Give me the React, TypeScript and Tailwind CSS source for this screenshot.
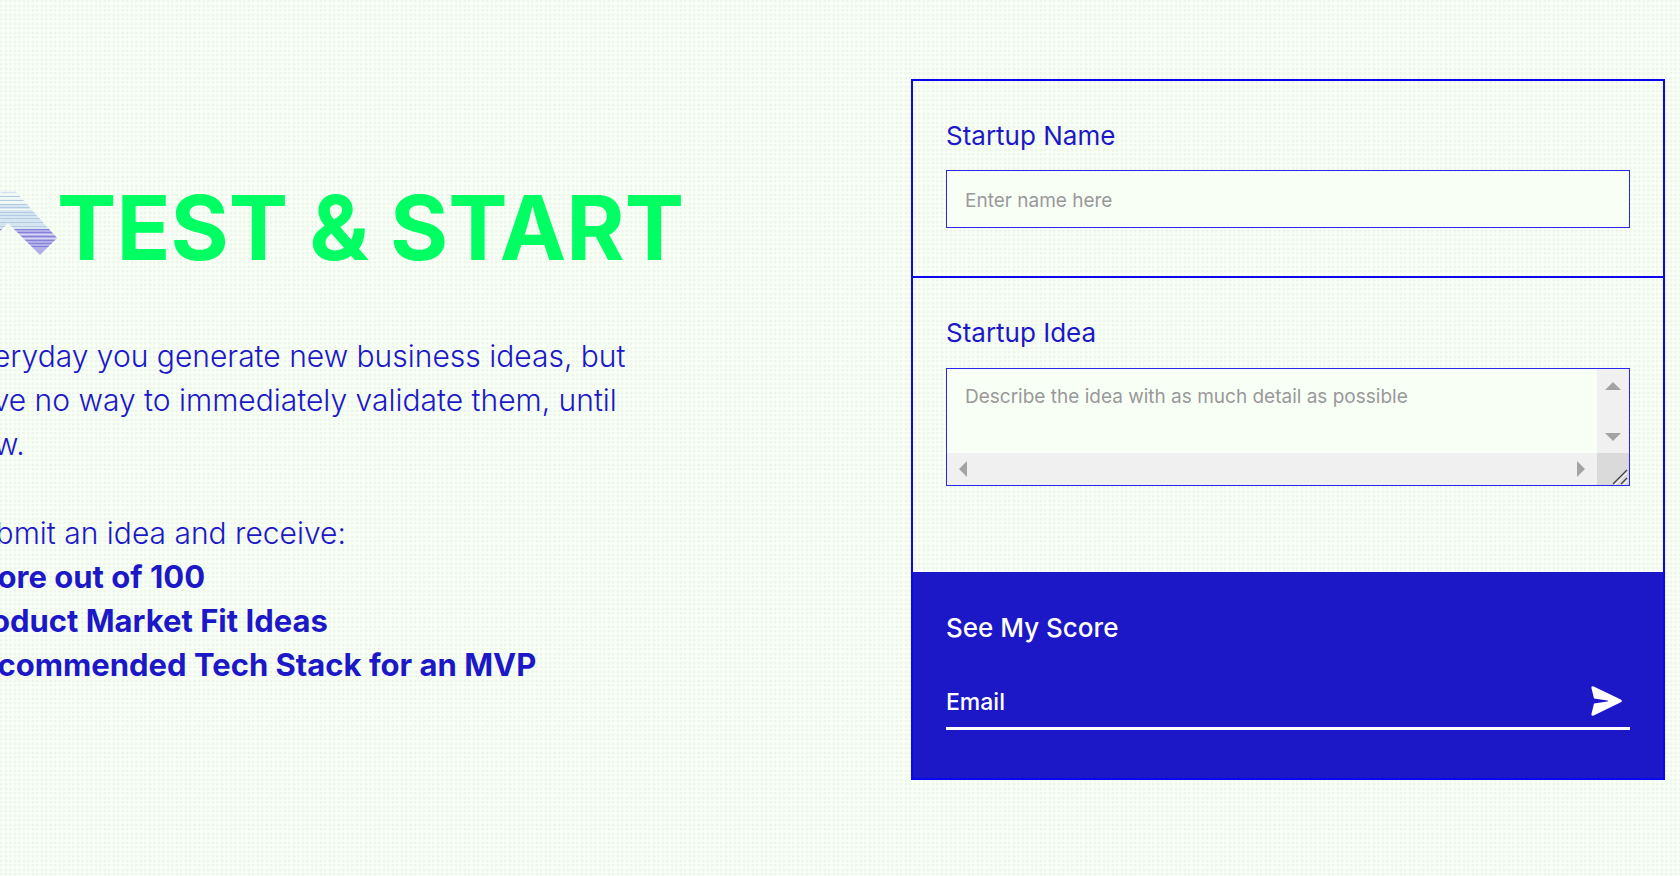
import { FormEvent, useState } from "react";

function Logo() {
  return (
    <svg width="98" height="64" viewBox="0 0 98 64" className="mt-2 shrink-0" aria-hidden="true">
      <defs>
        <clipPath id="chevron">
          <path d="M43 0H56L98 47L81 64L49 32L17 64L0 47Z" />
        </clipPath>
      </defs>
      <g clipPath="url(#chevron)">
        <path d="M0 0H98V14H0Z" fill="#eaf4f3" />
        <path d="M0 14H98V38H0Z" fill="#d6e5f0" />
        <path d="M0 38H98V64H0Z" fill="#b2afe8" />
        <path
          d="M0 5.5H98M0 9.5H98M0 13.5H98M0 16.5H98M0 21.5H98M0 24.5H98M0 27.5H98M0 31.5H98M0 35.5H98"
          stroke="#b3cce4"
        />
        <path d="M0 1.5H98" stroke="#d3e2ec" />
        <path d="M0 3.5H98M0 7H98M0 11H98M0 18.5H98" stroke="#f5fcf5" />
        <path d="M0 38.5H98M0 41.5H98M0 45.5H98M0 49.5H98M0 52.5H98M0 55.5H98" stroke="#8582dc" />
        <path d="M0 43.5H98M0 47.5H98" stroke="#d9d8f5" />
      </g>
    </svg>
  );
}

export default function App() {
  const [name, setName] = useState("");
  const [idea, setIdea] = useState("");
  const [email, setEmail] = useState("");

  function handleSubmit(event: FormEvent) {
    event.preventDefault();
  }

  return (
    <main className="min-h-screen overflow-hidden bg-[#f8fff5] bg-[radial-gradient(circle_at_1px_1px,#edf5ec_1px,transparent_2px),radial-gradient(circle_at_6px_1px,#edf5ec_1px,transparent_2px),radial-gradient(circle_at_1px_6px,#edf5ec_1px,transparent_2px),radial-gradient(circle_at_6px_6px,#edf5ec_1px,transparent_2px)] bg-[length:9px_9px] font-['Inter',sans-serif] text-[#1c18c8]">
      <div className="grid grid-cols-[911fr_754fr] items-start pr-[15px] pt-[79px] pb-24">
        <section className="-ml-[41px] pt-[104px]">
          <div className="flex items-start">
            <Logo />
            <h1 className="whitespace-nowrap text-[89px] leading-none font-bold text-[#00ff62]">TEST &amp; START</h1>
          </div>
          <p className="mt-[62px] max-w-[680px] text-[30px] leading-[44px] font-light">
            Everyday you generate new business ideas, but have no way to immediately validate them, until now.
          </p>
          <p className="mt-[45px] text-[30px] leading-[44px] font-light">Submit an idea and receive:</p>
          <ul className="text-[31px] leading-[44px] font-bold">
            <li>Score out of 100</li>
            <li>Product Market Fit Ideas</li>
            <li>Recommended Tech Stack for an MVP</li>
          </ul>
        </section>

        <form onSubmit={handleSubmit} className="border-2 border-[#0a06f0]">
          <div className="border-b-2 border-[#0a06f0] px-[33px] pt-[37px] pb-12">
            <label htmlFor="name" className="block text-[26px] leading-9">Startup Name</label>
            <input
              id="name"
              type="text"
              value={name}
              onChange={(e) => setName(e.target.value)}
              placeholder="Enter name here"
              className="mt-4 block h-[58px] w-full border border-[#2a26f0] bg-[#f8fff5] px-[18px] pt-[2px] text-[19px] outline-none placeholder:text-[#999]"
            />
          </div>

          <div className="px-[33px] pt-[37px] pb-[86px]">
            <label htmlFor="idea" className="block text-[26px] leading-9">Startup Idea</label>
            <div className="mt-[17px] grid grid-cols-[1fr_32px] grid-rows-[84px_32px] border border-[#2a26f0] bg-[#f8fff5]">
              <textarea
                id="idea"
                value={idea}
                onChange={(e) => setIdea(e.target.value)}
                placeholder="Describe the idea with as much detail as possible"
                className="block resize-none overflow-hidden px-[18px] py-[14px] text-[19px] leading-7 outline-none placeholder:text-[#999]"
              />
              <div className="flex flex-col items-center justify-between bg-[#f0f0f0] pt-[13px] pb-3" aria-hidden="true">
                <svg width="16" height="8" viewBox="0 0 16 8"><path d="M8 0L16 8H0Z" fill="#a3a3a3" /></svg>
                <svg width="16" height="8" viewBox="0 0 16 8"><path d="M0 0H16L8 8Z" fill="#a3a3a3" /></svg>
              </div>
              <div className="flex items-center justify-between bg-[#f0f0f0] px-3" aria-hidden="true">
                <svg width="8" height="16" viewBox="0 0 8 16"><path d="M8 0V16L0 8Z" fill="#a3a3a3" /></svg>
                <svg width="8" height="16" viewBox="0 0 8 16"><path d="M0 0L8 8L0 16Z" fill="#a3a3a3" /></svg>
              </div>
              <div className="flex items-end justify-end bg-[#dadada] pr-px" aria-hidden="true">
                <svg width="16" height="16" viewBox="0 0 16 16" fill="none">
                  <path d="M3 16L16 3M11 16L16 11" stroke="#fff" />
                  <path d="M1 15L15 1M9 15L15 9" stroke="#444" strokeWidth="1.4" />
                </svg>
              </div>
            </div>
          </div>

          <div className="bg-[#1c18c8] px-[33px] pt-[38px] pb-12 text-white">
            <h2 className="text-[26px] leading-9 font-medium">See My Score</h2>
            <div className="mt-8 flex h-[52px] items-center border-b-3 border-white">
              <input
                type="email"
                aria-label="Email"
                value={email}
                onChange={(e) => setEmail(e.target.value)}
                placeholder="Email"
                className="min-w-0 flex-1 text-[23px] font-medium outline-none placeholder:text-white placeholder:opacity-100"
              />
              <button type="submit" aria-label="Send" className="mr-2 mb-1">
                <svg width="31" height="30" viewBox="0 0 31 30" fill="#fff">
                  <path d="M2.7 0.4L29.8 13.6Q32 15 29.8 16.3L2.7 29.6Q0 30.5 0.5 27.8L3 17.6L16.5 15.5Q17.6 15 16.5 14.5L3 12.6L0.5 2.2Q0 -0.5 2.7 0.4Z" />
                </svg>
              </button>
            </div>
          </div>
        </form>
      </div>
    </main>
  );
}
